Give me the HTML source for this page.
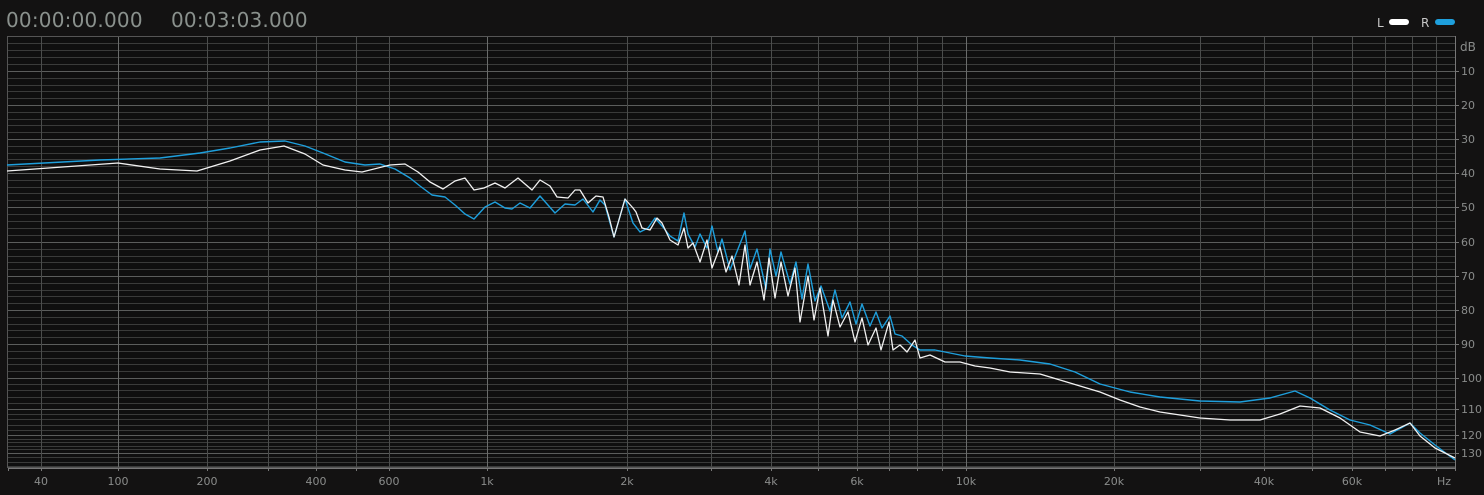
<!DOCTYPE html>
<html><head><meta charset="utf-8"><style>
html,body{margin:0;padding:0;background:#131212;width:1484px;height:495px;overflow:hidden;font-family:"DejaVu Sans","Liberation Sans",sans-serif}
.t{position:absolute;top:8px;font-size:20px;color:#8a918d;letter-spacing:0.2px}
</style></head><body>
<div class="t" style="left:6px">00:00:00.000</div>
<div class="t" style="left:171px">00:03:03.000</div>
<svg id="s" width="1484" height="495" style="position:absolute;left:0;top:0"></svg>
<script>
const s=document.getElementById('s');let h='';
h+=`<rect x="8" y="37" width="1447" height="431" fill="#0f0f0f"/>`;
const db=[[0,36],[10,71],[20,105],[30,139],[40,173],[50,207],[60,242],[70,276],[80,310],[90,344],[100,378],[110,409],[120,435],[130,453],[136,466]];
function y(d){for(let i=1;i<db.length;i++){if(d<=db[i][0]){const a=db[i-1],b=db[i];return a[1]+(d-a[0])/(b[0]-a[0])*(b[1]-a[1]);}}return 466;}
for(let d=0;d<=136;d+=2){const yy=Math.round(y(d))+.5;h+=`<line x1="8" x2="1455" y1="${yy}" y2="${yy}" stroke="${d%10==0?'#5b5d5c':'#3a3b3a'}" stroke-width="1"/>`;}
const fx=[[30,8],[40,41],[100,118],[200,207],[300,268],[400,316],[500,356],[600,389],[1000,487],[2000,627],[3000,711],[4000,771],[5000,818],[6000,857],[7000,889],[8000,917],[9000,942],[10000,966],[20000,1114],[30000,1200],[40000,1264],[50000,1312],[60000,1352],[70000,1385],[80000,1412],[90000,1436],[96000,1455]];
fx.forEach(([f,x],i)=>{if(i==0)return;h+=`<line x1="${x+.5}" x2="${x+.5}" y1="36" y2="468" stroke="${[100,1000,10000].includes(f)?'#6a6c6b':'#4b4d4c'}"/>`;});
h+=`<rect x="7.5" y="36.5" width="1448" height="431" fill="none" stroke="#555"/>`;
h+=`<line x1="1455.5" x2="1455.5" y1="36" y2="470" stroke="#777"/><line x1="8" x2="1455" y1="468.5" y2="468.5" stroke="#777"/>`;
fx.forEach(([f,x])=>{h+=`<line x1="${x+.5}" x2="${x+.5}" y1="468" y2="471" stroke="#777"/>`});
[10,20,30,40,50,60,70,80,90,100,110,120,130].forEach(d=>{h+=`<line x1="1455" x2="1459" y1="${Math.round(y(d))+.5}" y2="${Math.round(y(d))+.5}" stroke="#777"/><text x="1461" y="${Math.round(y(d))+4}" fill="#8a8c8b" font-size="11">${d}</text>`});
h+=`<text x="1460" y="51" fill="#8a8c8b" font-size="12">dB</text>`;
[['40',41],['100',118],['200',207],['400',316],['600',389],['1k',487],['2k',627],['4k',771],['6k',857],['10k',966],['20k',1114],['40k',1264],['60k',1352],['Hz',1444]].forEach(([t,x])=>{h+=`<text x="${x}" y="485" fill="#8a8c8b" font-size="11" text-anchor="middle">${t}</text>`});
h+=`<text x="1377" y="27" fill="#c8c8c8" font-size="12">L</text><rect x="1389" y="19" width="20" height="6" rx="3" fill="#fff"/>`;
h+=`<text x="1421" y="27" fill="#c8c8c8" font-size="12">R</text><rect x="1435" y="19" width="20" height="6" rx="3" fill="#1e9fdc"/>`;
let B="7,165 100,160 160,158 200,153 230,148 260,142 285,141 305,146 323,153 345,162 365,165 380,164 395,169 410,178 420,186 432,195 445,197 455,205 465,214 474,219 485,207 495,202 505,208 512,209 520,203 530,208 540,196 555,213 565,204 575,205 583,199 593,212 600,200 605,205 614,237 625,199 633,223 640,232 648,228 655,218 662,232 670,242 678,247 684,219 688,240 695,253 700,240 707,254 712,232 718,258 722,245 730,276 736,260 745,237 750,275 757,255 766,295 770,255 776,282 781,258 790,290 796,268 802,305 808,270 815,307 821,292 830,317 835,296 842,324 850,308 856,330 862,310 870,332 876,318 882,334 890,322 895,340 902,342 912,345 920,350 935,350 950,353 965,356 990,358 1020,360 1050,364 1075,372 1100,384 1130,392 1160,397 1200,401 1240,402 1270,398 1295,391 1310,398 1330,410 1350,420 1370,425 1390,434 1410,423 1420,433 1435,445 1455,460";
B=B.split(' ').map(p=>{let [x,yy]=p.split(',').map(Number);if(x>=660&&x<=910)yy-=6;return x+','+yy}).join(' ');
const W="7,171 118,163 160,169 197,171 230,161 260,150 284,146 305,154 323,165 345,170 362,172 390,165 405,164 418,172 430,182 443,189 455,181 465,178 474,190 484,188 495,183 505,188 518,178 532,190 540,180 550,186 557,197 568,198 575,190 580,190 588,203 596,196 603,197 609,217 614,237 625,199 633,208 636,212 642,228 650,230 657,218 662,223 670,240 678,245 684,228 688,248 693,243 700,262 707,240 712,268 720,247 726,272 732,256 739,285 745,245 750,285 757,262 764,300 769,258 775,298 781,262 788,296 795,268 800,322 808,276 814,320 820,288 828,336 833,300 840,327 848,312 855,342 862,318 868,345 876,328 881,350 889,322 893,350 900,345 907,352 915,340 920,358 930,355 945,362 960,362 975,366 990,368 1010,372 1040,374 1060,380 1080,386 1100,392 1120,400 1140,407 1160,412 1180,415 1200,418 1230,420 1260,420 1280,414 1300,406 1320,408 1340,418 1360,432 1380,436 1395,430 1410,423 1420,436 1435,448 1455,458";
h+=`<polyline points="${B}" fill="none" stroke="#1e9fdc" stroke-width="1.4" stroke-linejoin="round"/>`;
h+=`<polyline points="${W}" fill="none" stroke="#f2f2f2" stroke-width="1.3" stroke-linejoin="round"/>`;
s.innerHTML=h;
</script>
</body></html>
